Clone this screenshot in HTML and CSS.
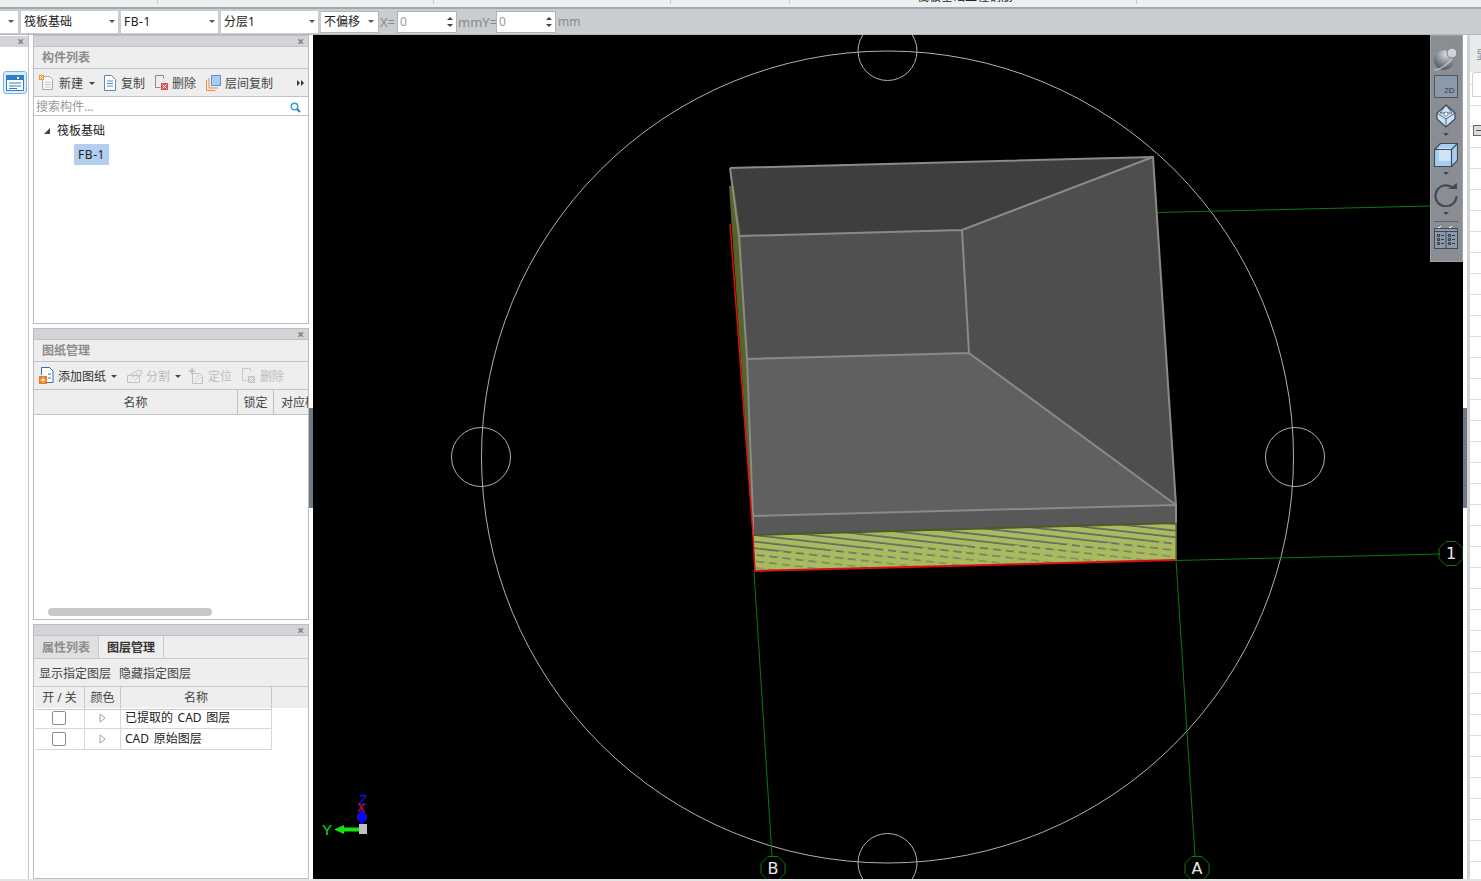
FILE: index.html
```html
<!DOCTYPE html>
<html lang="zh">
<head>
<meta charset="utf-8">
<title>筏板基础</title>
<link rel="stylesheet" href="styles.css">
</head>
<body>
<div class="app">
  <div class="topstrip">
    <i class="tick t1"></i><i class="tick t2"></i><i class="tick t3"></i><i class="tick t4"></i><i class="tick t5"></i>
    <span class="cliptext">筏板基础工程钢筋</span>
  </div>
  <div class="toolbar">
    <div class="combo c0"><b class="caret"></b></div>
    <div class="combo c1"><span>筏板基础</span><b class="caret"></b></div>
    <div class="combo c1"><span class="latin">FB-1</span><b class="caret"></b></div>
    <div class="combo c1"><span>分层1</span><b class="caret"></b></div>
    <div class="combo c2"><span>不偏移</span><b class="caret"></b></div>
    <span class="lbl lx">X=</span>
    <div class="spin"><span>0</span><em class="arrows"><b class="up"></b><b class="down"></b></em></div>
    <span class="lbl ly">mmY=</span>
    <div class="spin"><span>0</span><em class="arrows"><b class="up"></b><b class="down"></b></em></div>
    <span class="lbl lm">mm</span>
  </div>
  <div class="main">
    <aside class="rail">
      <div class="railhead"><span class="close">×</span></div>
      <div class="railbtn">
        <svg width="18" height="16" viewBox="0 0 18 16"><rect x=".5" y=".5" width="17" height="15" fill="#fff" stroke="#2f7fc1"/><rect x="1" y="1" width="16" height="4" fill="#2f7fc1"/><path d="M3 8h12M3 11h12M3 13.500h8" stroke="#2f7fc1"/><path d="M11 2h2v2h-2z" fill="#fff"/></svg>
      </div>
    </aside>
    <div class="panels">
      <section class="panel p1">
        <div class="phead"><span class="close">×</span></div>
        <div class="ptitle">构件列表</div>
        <div class="ptools">
          <svg class="ic i1" width="16" height="16" viewBox="0 0 16 16"><path d="M3.500 1.500h7l3 3v10h-10z" fill="#fafafa" stroke="#a8a8a8"/><path d="M6 7h6M6 9.500h6M6 12h6" stroke="#c4c4c4"/><rect x="0" y="0" width="5" height="5" fill="#f39a2c"/><path d="M1 1l3 3M4 1l-3 3" stroke="#fff"/></svg>
          <span class="tx">新建</span><b class="caret dk m1"></b>
          <svg class="ic i2" width="14" height="16" viewBox="0 0 14 16"><path d="M1.500 .5h7l4 4v11h-11z" fill="#fff" stroke="#5a87b8"/><path d="M4 6h6M4 8.500h6M4 11h6" stroke="#5a87b8"/></svg>
          <span class="tx">复制</span>
          <svg class="ic i3" width="15" height="16" viewBox="0 0 15 16"><path d="M1.500 .5h8v3M1.500 .5v12h5" fill="none" stroke="#8a8a8a"/><rect x="7" y="8" width="7" height="7" fill="#d9534f"/><path d="M8.500 9.500l4 4M12.500 9.500l-4 4" stroke="#fff"/></svg>
          <span class="tx">删除</span>
          <svg class="ic i4" width="15" height="16" viewBox="0 0 15 16"><path d="M.5 5v10.500h9M3 3v10h9" fill="none" stroke="#ee8a3a"/><rect x="5.500" y=".5" width="9" height="10" fill="#a9cdf2" stroke="#5e93cf"/></svg>
          <span class="tx">层间复制</span>
          <span class="more"><b></b><b></b></span>
        </div>
        <div class="search"><span>搜索构件...</span>
          <svg width="11" height="11" viewBox="0 0 11 11"><circle cx="4.500" cy="4.500" r="3.300" fill="none" stroke="#3d9fd3" stroke-width="1.500"/><path d="M7 7l3 3" stroke="#2f7fc1" stroke-width="2"/></svg>
        </div>
        <div class="tree">
          <div class="troot"><i class="tri"></i><span>筏板基础</span></div>
          <div class="tleaf"><span class="latin">FB-1</span></div>
        </div>
      </section>
      <section class="panel p2">
        <div class="phead"><span class="close">×</span></div>
        <div class="ptitle">图纸管理</div>
        <div class="ptools">
          <svg class="ic i1" width="15" height="17" viewBox="0 0 15 17"><path d="M2.500 8V.5h8l3.500 3.500v11.500H8" fill="#fff" stroke="#2d6fb3"/><path d="M9 7h3M9 11h3" stroke="#2d6fb3"/><rect x="0" y="9" width="8" height="8" fill="#ee7d22"/><path d="M4 10.500v5M1.500 13h5" stroke="#fff"/></svg>
          <span class="tx dark">添加图纸</span><b class="caret dk m2"></b>
          <svg class="ic i5" width="16" height="15" viewBox="0 0 16 15"><path d="M.5 7.500h12v7H.5zM3 7l8-5 4 1-2 5M5 10l6-5M8 12l5-5" fill="none" stroke="#c2c2c2"/></svg>
          <span class="tx off">分割</span><b class="caret dk m3"></b>
          <svg class="ic i6" width="15" height="16" viewBox="0 0 15 16"><path d="M3.500 5.500h7l3 3v7h-10z" fill="none" stroke="#c2c2c2"/><path d="M5 11l5-4M6 14l6-5" stroke="#d0d0d0"/><path d="M3 0v6M0 3h6" stroke="#bcbcbc" stroke-width="1.500"/></svg>
          <span class="tx off">定位</span>
          <svg class="ic i3b" width="15" height="16" viewBox="0 0 15 16"><path d="M1.500 .5h8v3M1.500 .5v12h5" fill="none" stroke="#c8c8c8"/><rect x="7" y="8" width="7" height="7" fill="#c8c8c8"/><path d="M8.500 9.500l4 4M12.500 9.500l-4 4" stroke="#fff"/></svg>
          <span class="tx off">删除</span>
        </div>
        <div class="thead2"><div class="cn">名称</div><div class="cl">锁定</div><div class="cd">对应楼层</div></div>
        <div class="pbody2"><div class="hscroll"></div></div>
      </section>
      <section class="panel p3">
        <div class="phead"><span class="close">×</span></div>
        <div class="tabs"><div class="tab off">属性列表</div><div class="tab on">图层管理</div></div>
        <div class="layeracts"><span>显示指定图层</span><span>隐藏指定图层</span></div>
        <div class="lhead"><div>开 / 关</div><div>颜色</div><div>名称</div><div></div></div>
        <div class="lrow"><div><i class="chk"></i></div><div><svg class="play" width="7" height="10" viewBox="0 0 7 10"><path d="M1 1L6 5L1 9z" fill="#fff" stroke="#a0a0a0"/></svg></div><div class="lname">已提取的 CAD 图层</div></div>
        <div class="lrow"><div><i class="chk"></i></div><div><svg class="play" width="7" height="10" viewBox="0 0 7 10"><path d="M1 1L6 5L1 9z" fill="#fff" stroke="#a0a0a0"/></svg></div><div class="lname">CAD 原始图层</div></div>
      </section>
    </div>
    <div class="split left"><i></i></div>
    <div class="canvas">
      <svg class="scene" width="1150" height="844" viewBox="313 35 1150 844">
        <defs>
          <pattern id="hatch" width="120" height="6.500" patternUnits="userSpaceOnUse" patternTransform="rotate(6.500 753 535)">
            <path d="M0 2h120" stroke="#5e5e68" stroke-width="1.700"/>
          </pattern>
          <pattern id="gaps" width="13" height="6.500" patternUnits="userSpaceOnUse" patternTransform="rotate(6.500 753 535)">
            <path d="M0 2h5" stroke="#a8bc5f" stroke-width="2.500"/>
          </pattern>
          <linearGradient id="fade" gradientUnits="userSpaceOnUse" x1="753" y1="535" x2="754" y2="571">
            <stop offset="0" stop-color="#a8bc5f" stop-opacity="0"/>
            <stop offset=".5" stop-color="#a8bc5f" stop-opacity=".1"/>
            <stop offset="1" stop-color="#a8bc5f" stop-opacity=".6"/>
          </linearGradient>
        </defs>
        <g fill="none" stroke="#b0b0b0" stroke-width="1">
          <circle cx="887.500" cy="457" r="406"/>
          <circle cx="887.500" cy="51" r="29.500"/>
          <circle cx="481" cy="457" r="29.500"/>
          <circle cx="1295" cy="457" r="29.500"/>
          <circle cx="887.500" cy="863" r="29.500"/>
        </g>
        <g fill="none" stroke="#0a7a0a" stroke-width="1">
          <path d="M1158 212.500L1430 206M1176 560.500L1440 554M754 571L772 856M1176 560L1195 856"/>
          <path d="M1446 541.500h10l7 7v10l-7 7h-10l-7-7v-10z"/>
          <path d="M768 856.500h10l7 7v10l-7 7h-10l-7-7v-10z"/>
          <path d="M1192 856.500h10l7 7v10l-7 7h-10l-7-7v-10z"/>
        </g>
        <polygon points="730,168 1153,157 962,230 739,236" fill="#3e3e3e"/>
        <polygon points="1153,157 1176,505 969,353 962,230" fill="#4e4e4e"/>
        <polygon points="739,236 962,230 969,353 747,359" fill="#505050"/>
        <polygon points="747,359 969,353 1176,505 753,516" fill="#606060"/>
        <polygon points="753,516 1176,505 1176,523 753,535" fill="#585858"/>
        <polygon points="730,168 739,236 747,359 753,516 753,535" fill="#333"/>
        <polygon points="729,186 734,186 741,236 749,400 753,516 753,540" fill="#55642a"/>
        <polygon points="753,535 1176,523 1176,560 755,571" fill="#a8bc5f"/>
        <polygon points="753,535 1176,523 1176,560 755,571" fill="url(#hatch)"/>
        <polygon points="754,552 1176,541 1176,560 755,571" fill="url(#gaps)"/>
        <polygon points="753,535 1176,523 1176,560 755,571" fill="url(#fade)"/>
        <path d="M753 535L1176 523" stroke="#4c5a24" stroke-width="2" fill="none"/>
        <g fill="none" stroke="#8a8a8a" stroke-width="2">
          <path d="M730 168L1153 157L1176 505V523M730 168L739 236L962 230L1153 157M962 230L969 353L1176 505M739 236L747 359L969 353M747 359L753 516L1176 505M753 516V535"/>
        </g>
        <path d="M730 224L753 535L755 571" fill="none" stroke="#e01010" stroke-width="1.500"/>
        <path d="M755 571L1176 560" fill="none" stroke="#d81010" stroke-width="2"/>
        <path d="M1176 523V560" fill="none" stroke="#6c7a36" stroke-width="1.500"/>
        <text class="bubble" x="1451" y="559">1</text>
        <text class="bubble" x="773" y="874">B</text>
        <text class="bubble" x="1197" y="874">A</text>
        <g>
          <path d="M359 827.500H344V825L334 829.500L344 834V831.500H359z" fill="#14e014"/>
          <rect x="359" y="824" width="8" height="10" fill="#c0c0c0"/>
          <ellipse cx="362" cy="817" rx="5" ry="5" fill="#e80808"/>
          <path d="M362 807C364 812 367 815 367 818C367 820 365 821 364 821V824H360V821C359 821 357 820 357 818C357 815 360 812 362 807z" fill="#0808f0"/>
          <text class="tz" x="363" y="805">Z</text>
          <text class="tr" x="361" y="812">X</text>
          <text class="ty" x="327" y="835">Y</text>
        </g>
      </svg>
      <div class="viewbar">
        <svg class="vsphere" width="26" height="24" viewBox="0 0 26 24"><defs><radialGradient id="ball" cx=".6" cy=".2" r=".85"><stop offset="0" stop-color="#d8dce0"/><stop offset=".5" stop-color="#8f96a0"/><stop offset="1" stop-color="#454d57"/></radialGradient></defs><circle cx="11" cy="13" r="10" fill="url(#ball)"/><path d="M1 23C8 23 18 15 21 8" fill="none" stroke="#c8ccd1" stroke-width="1.200"/><circle cx="19" cy="6" r="5" fill="#d0d4d9" stroke="#767e88"/></svg>
        <div class="btn2d">2D</div>
        <svg width="20" height="24" viewBox="0 0 20 24"><path d="M10 1L19 9V15L10 23L1 15V9z" fill="#c9e2f8" stroke="#3f4a58" stroke-width="1.200"/><path d="M1 9L10 15L19 9M10 15V23M10 1L4 9h12z" fill="none" stroke="#3f4a58" stroke-width=".8"/><circle cx="10" cy="10" r="2" fill="#fff" stroke="#3f4a58" stroke-width=".6"/></svg>
        <b class="vcaret"></b>
        <svg width="24" height="24" viewBox="0 0 24 24"><path d="M.5 6.500L6.500.5H23.500V17.500L17.500 23.500H.5z" fill="#a9cdf0" stroke="#3f4a58" stroke-width="1.200"/><rect x="5" y="5" width="13" height="13" fill="#cfe4f8"/><path d="M.5 6.500H17.500V23.500M17.500 6.500L23.500.5" fill="none" stroke="#3f4a58" stroke-width="1.200"/></svg>
        <b class="vcaret vc2"></b>
        <svg width="24" height="24" viewBox="0 0 24 24"><path d="M19 5A10.500 10.500 0 1 0 22.500 13" fill="none" stroke="#3f4a58" stroke-width="2.200"/><path d="M14 6H23V0z" fill="#3f4a58"/></svg>
        <b class="vcaret"></b>
        <i class="vsep"></i>
        <svg width="24" height="23" viewBox="0 0 24 23"><rect x=".5" y="2.500" width="23" height="20" fill="#8b99aa" stroke="#3f4a58"/><path d="M.5 5.500h23M12 5.500v17" fill="none" stroke="#3f4a58"/><path d="M3.500 8.500h2v2h-2zM3.500 12.500h2v2h-2zM3.500 16.500h2v2h-2zM14.500 8.500h2v2h-2zM14.500 12.500h2v2h-2zM14.500 16.500h2v2h-2zM7 9.500h3M7 13.500h3M7 17.500h3M18 9.500h3M18 13.500h3M18 17.500h3" fill="none" stroke="#2f3843"/><path d="M4 1l1 1 2-2M15 1l1 1 2-2" fill="none" stroke="#fff"/></svg>
      </div>
    </div>
    <div class="split right"><i></i></div>
    <div class="side">
      <div class="sidetop"><span class="sidelabel">显</span></div>
      <div class="sidetab"></div>
      <div class="sidegrid"><i class="minus"></i></div>
    </div>
  </div>
  <div class="bottom"></div>
</div>
</body>
</html>
```
FILE: styles.css
```css
* { box-sizing: border-box; }
html, body { margin: 0; padding: 0; height: 100%; background: #fff; overflow: hidden; }
body { font: 12px/16px "Noto Sans", "Noto Sans CJK SC", sans-serif; color: #222; }
.app { width: 1481px; height: 881px; display: flex; flex-direction: column; overflow: hidden; }
.latin { letter-spacing: .5px; }

.topstrip { position: relative; height: 9px; flex: none; background: #ecf0f0; border-bottom: 2px solid #a4a8a8; overflow: hidden; }
.tick { position: absolute; top: 0; width: 1px; height: 4px; background: #c6c9c9; }
.t1 { left: 157px; } .t2 { left: 433px; } .t3 { left: 670px; } .t4 { left: 789px; } .t5 { left: 1136px; }
.cliptext { position: absolute; left: 917px; top: -11px; white-space: nowrap; font-size: 12px; }

.toolbar { height: 26px; flex: none; background: #c9ccd0; display: flex; align-items: center; padding-top: 0; border-bottom: 1px solid #b5b8bc; }
.combo { height: 22px; background: #fff; display: flex; align-items: center; justify-content: space-between; padding: 0 3px 0 3px; margin-right: 3px; }
.c0 { width: 18px; margin-right: 3px; padding-right: 4px; justify-content: flex-end; }
.c1 { width: 97px; }
.c2 { width: 58px; margin-right: 0; border: 1px solid #b3b5b8; border-left: 0; padding-left: 3px; padding-right: 4px; }
.caret { width: 0; height: 0; border: 3px solid transparent; border-top: 3px solid #555; border-bottom: 0; }
.lbl { color: #8a8a8a; font-size: 13px; }
.lx { width: 18px; padding-left: 1px; }
.ly { width: 39px; padding-left: 1px; }
.lm { padding-left: 2px; font-size: 12px; }
.spin { width: 60px; height: 22px; background: #fff; border: 1px solid #b0b2b5; display: flex; align-items: center; justify-content: space-between; padding: 0 3px 0 2px; color: #9a9a9a; }
.arrows { display: flex; flex-direction: column; gap: 4px; }
.arrows .up { border: 3px solid transparent; border-bottom: 3px solid #444; border-top: 0; }
.arrows .down { border: 3px solid transparent; border-top: 3px solid #444; border-bottom: 0; }

.main { flex: 1; display: flex; min-height: 0; }
.rail { width: 29px; flex: none; background: #fff; border-right: 1px solid #c3c5c7; padding-top: 1px; }
.railhead { height: 11px; background: #d2d4d8; position: relative; }
.close { position: absolute; right: 4px; top: -2px; font-size: 12px; line-height: 16px; color: #808080; font-weight: 700; }
.railbtn { margin: 24px 0 0 3px; width: 24px; height: 23px; border: 1px solid #7db4ea; border-radius: 3px; background: #dcecfc; display: flex; align-items: center; justify-content: center; }

.panels { width: 276px; margin-left: 4px; flex: none; display: flex; flex-direction: column; gap: 4px; }
.panel { background: #fff; border: 1px solid #bcbec1; display: flex; flex-direction: column; overflow: hidden; }
.p1 { height: 289px; }
.p2 { height: 292px; }
.p3 { flex: 1; }
.phead { height: 11px; flex: none; background: #d2d4d8; position: relative; border-bottom: 1px solid #c0c2c5; }
.ptitle { height: 22px; flex: none; background: #eeeeee; color: #8c8c8c; font-weight: 700; padding: 3px 0 0 8px; border-bottom: 1px solid #c0c2c5; }
.ptools { height: 28px; flex: none; background: #eeeeee; display: flex; align-items: center; padding: 2px 0 0 5px; border-bottom: 1px solid #c0c2c5; position: relative; }
.tx { color: #444; white-space: nowrap; }
.tx.dark { color: #333; }
.tx.off { color: #bdbdbd; }
.ic { flex: none; margin-right: 4px; margin-top: -2px; }
.i2 { margin-left: 8px; margin-right: 4px; }
.i3 { margin-left: 9px; margin-right: 3px; }
.i4 { margin-left: 10px; margin-right: 4px; }
.i5 { margin-left: 0; margin-right: 3px; }
.i6 { margin-left: 0; margin-right: 4px; }
.i3b { margin-left: 9px; margin-right: 4px; }
.caret.dk { border-top-color: #444; }
.m1 { margin: 0 0 0 6px; }
.m2 { margin: 0 10px 0 5px; }
.m3 { margin: 0 8px 0 5px; }
.more { position: absolute; right: 4px; top: 11px; display: flex; gap: 1px; }
.more b { border: 3px solid transparent; border-left: 3px solid #333; border-right: 0; }
.search { height: 19px; flex: none; display: flex; align-items: center; justify-content: space-between; padding: 2px 7px 0 2px; color: #999; border-bottom: 1px solid #c0c2c5; background: #fff; }
.tree { flex: 1; background: #fff; padding-top: 7px; }
.troot { display: flex; align-items: center; padding-left: 10px; height: 16px; gap: 7px; color: #222; }
.tri { width: 0; height: 0; border-left: 6px solid transparent; border-bottom: 6px solid #444; }
.tleaf { margin: 5px 0 0 40px; width: 35px; height: 21px; background: #b2cfef; text-align: center; line-height: 21px; color: #222; }

.thead2 { display: flex; height: 25px; flex: none; background: #eeeeee; border-bottom: 1px solid #c0c2c5; line-height: 25px; text-align: center; color: #444; overflow: hidden; }
.cn { width: 204px; flex: none; border-right: 1px solid #c0c2c5; }
.cl { width: 36px; flex: none; border-right: 1px solid #c0c2c5; }
.cd { flex: none; white-space: nowrap; padding-left: 7px; text-align: left; }
.pbody2 { flex: 1; display: flex; align-items: flex-end; padding: 0 0 3px 14px; background: #fff; }
.hscroll { width: 164px; height: 8px; border-radius: 4px; background: #c8c8c8; }

.tabs { height: 23px; flex: none; display: flex; background: #eeeeee; border-bottom: 1px solid #c8cacc; }
.tab { width: 65px; text-align: center; line-height: 24px; border-right: 1px solid #c8cacc; }
.tab.off { background: #e0e0e0; color: #8c8c8c; font-weight: 700; }
.tab.on { background: #eeeeee; color: #333; font-weight: 700; }
.layeracts { height: 28px; flex: none; display: flex; align-items: center; gap: 8px; padding: 2px 0 0 5px; background: #eeeeee; border-bottom: 1px solid #c8cacc; color: #444; }
.lhead { display: grid; grid-template-columns: 50px 36px 151px 1fr; height: 21px; flex: none; background: #eeeeee; margin-left: 1px; line-height: 22px; text-align: center; color: #444; }
.lhead div { border-right: 1px solid #c8cacc; border-bottom: 1px solid #c8cacc; }
.lhead div:last-child { border: 0; }
.lrow { display: grid; grid-template-columns: 50px 36px 151px; height: 21px; flex: none; margin-left: 1px; }
.lrow > div { border-right: 1px solid #d8d8d8; border-bottom: 1px solid #d8d8d8; display: flex; align-items: center; justify-content: center; }
.lrow > .lname { justify-content: flex-start; padding-left: 4px; color: #222; word-spacing: 1.500px; }
.chk { width: 14px; height: 14px; margin-right: 2px; border: 1px solid #8c8c8c; border-radius: 2px; background: #fff; }
.play { display: block; }

.split { flex: none; display: flex; align-items: flex-start; background: #fff; }
.split.left { width: 4px; }
.split.right { width: 4px; }
.split i { display: block; width: 4px; height: 100px; margin-top: 373px; background: #6f7a85; }

.canvas { width: 1150px; flex: none; position: relative; background: #000; overflow: hidden; }
.scene { display: block; }
.bubble { font: 16px "DejaVu Sans", sans-serif; fill: #e8e8e8; text-anchor: middle; }
.tz { font: 14px "Liberation Sans", sans-serif; fill: #1414f0; text-anchor: middle; }
.tr { font: 12px "Liberation Sans", sans-serif; fill: #e01010; text-anchor: middle; }
.ty { font: 15px "Liberation Sans", sans-serif; fill: #14e014; text-anchor: middle; }
.viewbar { position: absolute; left: 1117px; top: 0; width: 33px; height: 227px; background: #8a8d92; border: 1px solid #9ea1a5; display: flex; flex-direction: column; align-items: center; padding: 11px 2px 0 0; }
.btn2d { width: 24px; height: 23px; flex: none; margin-top: 4px; margin-bottom: 6px; background: #8b99aa; border: 1px solid #4a5562; color: #2f3843; font: 8px/10px "Liberation Sans", sans-serif; display: flex; align-items: flex-end; justify-content: flex-end; padding: 0 2px 1px 0; }
.viewbar svg { flex: none; }
.vcaret { flex: none; margin: 5px 0 7px; border: 3px solid transparent; border-top: 3px solid #3f4a58; border-bottom: 0; }
.vcaret.vc2 { margin-bottom: 8px; }
.vsep { flex: none; width: 24px; height: 1px; background: #5e646c; margin: -1px 0 4px; }

.side { flex: 1; min-width: 0; border-left: 3px solid #d0d2d4; background: #fff; background-image: linear-gradient(#dcdcdc 1px, transparent 1px); background-size: 100% 21px; background-position: 0 7px; position: relative; }
.sidetop { height: 37px; background: #e8eaec; padding: 14px 0 0 6px; color: #888; font-size: 11px; }
.sidelabel { display: block; line-height: 12px; }
.sidetab { height: 25px; margin-left: 2px; background: #fff; border: 1px solid #d0d2d4; border-right: 0; border-radius: 3px 0 0 0; }
.sidegrid { padding: 28px 0 0 3px; }
.minus { display: block; width: 9px; height: 11px; border: 1px solid #666; border-right: 0; background: linear-gradient(#555,#555) 2px 4px/6px 1px no-repeat #ddd; }

.bottom { height: 2px; flex: none; background: #e4e4e4; }
```
